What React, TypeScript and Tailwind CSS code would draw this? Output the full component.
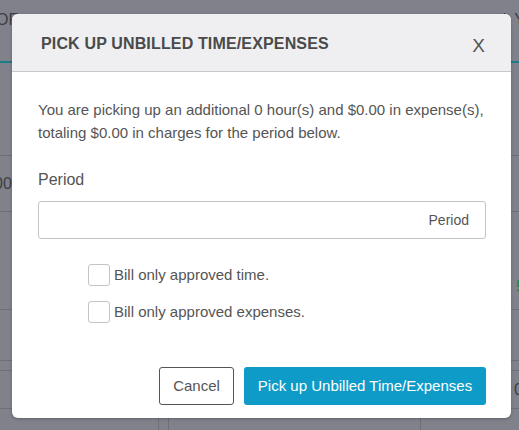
import React, { useState } from 'react';

const Backdrop: React.FC = () => (
  <div className="absolute inset-0 flex flex-col bg-[#81818b] text-[#3d3d44] text-[16px]">
    <div className="h-[61px] flex justify-between items-start pt-[12px] leading-none">
      <span className="-ml-[4px]">OF</span>
      <span className="mr-[-10px] tracking-[4px]">LY</span>
    </div>
    <div className="h-[94px] border-t-2 border-[#1d7d86]" />
    <div className="h-[56px] border-t border-[#6e6e77] flex items-center justify-between">
      <span className="-ml-[6px]">00</span>
    </div>
    <div className="h-[98px] border-t border-[#6e6e77] flex items-end justify-end pb-[10px]">
      <span className="text-[#1a8a3a] mr-[-6px]">5</span>
    </div>
    <div className="h-[51px] border-t border-[#6e6e77]" />
    <div className="h-[10px] border-t border-[#6e6e77]" />
    <div className="h-[38px] border-t border-[#6e6e77] flex items-center justify-end">
      <span className="mr-[-4px]">0</span>
    </div>
    <div className="flex-1 border-t border-[#6e6e77] flex">
      <div className="w-[159px] border-r border-[#6e6e77]" />
      <div className="w-[10px] border-r border-[#6e6e77]" />
      <div className="w-[252px] border-r border-[#6e6e77]" />
    </div>
  </div>
);

const Check: React.FC<{ label: string }> = ({ label }) => {
  const [on, setOn] = useState(false);
  return (
    <label className="flex items-center gap-[4px] cursor-pointer">
      <span
        onClick={() => setOn(!on)}
        className="w-[22px] h-[22px] rounded-[3px] border border-[#c4c4c4] bg-white flex items-center justify-center text-[12px] text-[#555]"
      >
        {on ? '✓' : ''}
      </span>
      <span className="text-[15px] text-[#555]">{label}</span>
    </label>
  );
};

export default function App() {
  return (
    <div className="relative w-[519px] h-[430px] overflow-hidden font-['Liberation_Sans',Arial,sans-serif]">
      <Backdrop />
      <div className="absolute left-[12px] top-[14px] w-[499px] h-[404px] bg-white rounded-[6px] overflow-hidden flex flex-col shadow-[0_1px_3px_rgba(0,0,0,0.25)]">
        <div className="h-[58px] shrink-0 bg-[#efeff1] border-b border-[#c8c8c8] flex items-center justify-between pl-[29px] pr-[26px] pt-[2px]">
          <h2 className="text-[16px] font-bold text-[#4a4a4a] tracking-[0.15px]">PICK UP UNBILLED TIME/EXPENSES</h2>
          <button className="text-[19px] text-[#555] leading-none mt-[4px]">X</button>
        </div>
        <div className="flex-1 flex flex-col pl-[26px] pr-[20px] pt-[26px]">
          <p className="text-[15px] leading-[23px] text-[#555]">
            You are picking up an additional 0 hour(s) and $0.00 in expense(s), totaling $0.00 in charges for the period below.
          </p>
          <div className="mt-[26px] text-[16px] text-[#555] leading-[20px]">Period</div>
          <div className="mt-[11px] mr-[5px] h-[38px] border border-[#c4c4c4] rounded-[3px] flex items-center justify-end pr-[16px]">
            <span className="text-[14px] text-[#555]">Period</span>
          </div>
          <div className="mt-[25px] ml-[50px] flex flex-col gap-[14px]">
            <Check label="Bill only approved time." />
            <Check label="Bill only approved expenses." />
          </div>
          <div className="mt-auto mb-[13px] mr-[5px] flex justify-end gap-[10px]">
            <button className="h-[38px] w-[75px] rounded-[3px] border border-[#555] bg-white text-[15px] text-[#555]">
              Cancel
            </button>
            <button className="h-[38px] w-[242px] rounded-[3px] bg-[#0f9bc7] text-[15px] text-white">
              Pick up Unbilled Time/Expenses
            </button>
          </div>
        </div>
      </div>
    </div>
  );
}
